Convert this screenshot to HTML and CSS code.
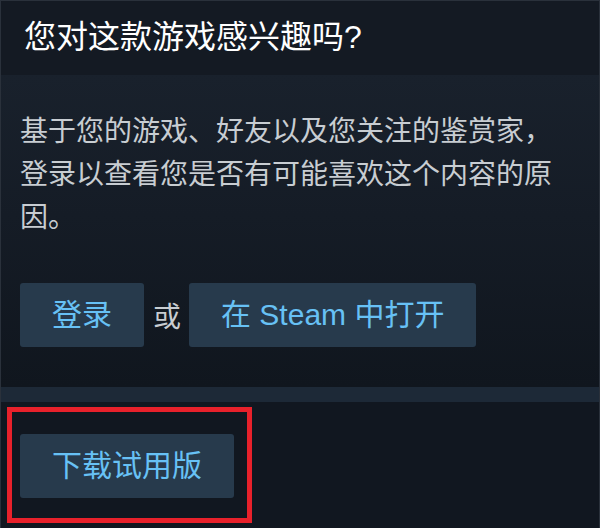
FILE: index.html
```html
<!DOCTYPE html>
<html lang="zh-CN">
<head>
    <meta charset="UTF-8">
    <meta name="viewport" content="width=device-width, initial-scale=1.0">
    <title>您对这款游戏感兴趣吗?</title>
    <link rel="stylesheet" href="styles.css">
</head>
<body>
    <div class="block">
        <div class="block-head">
            <h2>您对这款游戏感兴趣吗?</h2>
        </div>
        <div class="block-body">
            <p class="reason">基于您的游戏、好友以及您关注的鉴赏家，登录以查看您是否有可能喜欢这个内容的原因。</p>
            <div class="actions">
                <a class="btn" href="#">登录</a>
                <span class="or">或</span>
                <a class="btn" href="#">在 Steam 中打开</a>
            </div>
        </div>
        <div class="divider"></div>
        <div class="demo">
            <a class="btn" href="#">下载试用版</a>
            <div class="highlight"></div>
        </div>
    </div>
</body>
</html>
```

FILE: styles.css
```css
body{
    margin:0px;
    background-color:#121820;
    font-family:"Liberation Sans","Noto Sans CJK SC",sans-serif;
}
.block{
    width:600px;
    height:528px;
    box-sizing:border-box;
    border:1px solid #2a313b;
    border-bottom:none;
    background-color:#121820;
    overflow:hidden;
}
.block-head{
    height:74px;
    background-color:#141a23;
    padding-left:23px;
    display:flex;
    align-items:center;
}
.block-head h2{
    margin:0px;
    margin-top:-2px;
    color:#ffffff;
    font-size:32px;
    font-weight:normal;
    line-height:40px;
}
.block-body{
    height:312px;
    box-sizing:border-box;
    padding:35px 20px 0px 19px;
    background:linear-gradient(to bottom,#19212c 0%,#151c26 45%,#10161e 100%);
}
.reason{
    margin:0px;
    color:#c8cdd2;
    font-size:28px;
    line-height:43px;
    width:540px;
}
.actions{
    display:flex;
    align-items:center;
    margin-top:44px;
}
.btn{
    display:block;
    height:64px;
    line-height:64px;
    padding:0px 32px;
    border-radius:3px;
    background-color:#273a4c;
    color:#67c1f5;
    font-size:30px;
    text-decoration:none;
    white-space:nowrap;
}
.or{
    color:#c8cdd2;
    font-size:28px;
    margin:0px 8px 0px 9px;
}
.divider{
    height:15px;
    background-color:#1d2937;
}
.demo{
    position:relative;
    height:126px;
    box-sizing:border-box;
    padding:32px 0px 0px 19px;
    background-color:#111720;
}
.demo .btn{
    display:inline-block;
}
.highlight{
    position:absolute;
    left:6px;
    top:5px;
    width:245px;
    height:116px;
    box-sizing:border-box;
    border:5px solid #e8212b;
}
```
